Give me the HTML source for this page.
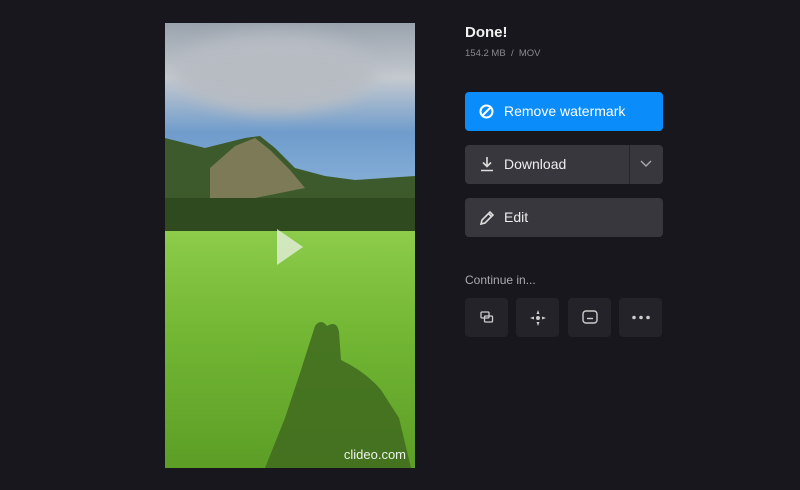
<!DOCTYPE html><html><head><style>
body{margin:0;width:800px;height:490px;background:#18171d;font-family:"Liberation Sans",sans-serif;position:relative;overflow:hidden}
.v{position:absolute;left:165px;top:23px;width:250px;height:445px;overflow:hidden;background:linear-gradient(#5ea423,#7cc23a 40%,#6aac2c)}
.abs{position:absolute}
.btn{position:absolute;left:465px;width:198px;height:39px;border-radius:4px;background:#38373d;color:#eee;font-size:14px;line-height:39px}
.btn span{position:absolute;left:39px}
.ib{position:absolute;top:298px;width:43px;height:39px;border-radius:4px;background:#242329}
</style></head><body>
<div class="v">
<div class="abs" style="left:0;top:0;width:250px;height:220px;background:linear-gradient(#9aa3ad,#c4c9cf 25%,#6f9ccc 50%,#9cc2e2)"></div>
<div class="abs" style="left:10px;top:10px;width:200px;height:80px;border-radius:50%;background:#b7bcc3;filter:blur(8px)"></div>
<svg class="abs" style="left:0;top:105px" width="250" height="110"><polygon points="0,10 20,15 40,20 60,15 80,10 95,8 110,20 130,40 160,48 190,52 220,50 250,48 250,110 0,110" fill="#3d5a2c"/><polygon points="45,40 70,18 90,10 105,22 125,42 140,60 90,70 45,70" fill="#7d7a58"/><rect y="70" width="250" height="40" fill="#2e4a1e"/></svg>
<div class="abs" style="left:0;top:208px;width:250px;height:237px;background:linear-gradient(#8ccc4a,#72b634 45%,#5c9e26)"></div>
<svg class="abs" style="left:100px;top:295px" width="150" height="150"><path d="M50 8 q6-8 12 0 q10-6 12 6 l2 28 q25 12 40 30 l18 28 l12 50 H0 l20-50 l15-45 z" fill="#3f6a1f" opacity=".85"/></svg>
<svg class="abs" style="left:112px;top:206px" width="28" height="36"><polygon points="0,0 26,18 0,36" fill="#e9f0e4" opacity=".75"/></svg>
<div class="abs" style="right:9px;bottom:6px;color:#fff;font-size:13px;opacity:.9">clideo.com</div>
</div>
<div class="abs" style="left:465px;top:24px;color:#f2f2f2;font-size:15px;font-weight:bold">Done!</div>
<div class="abs" style="left:465px;top:48px;color:#8a8990;font-size:9.5px">154.2 MB &nbsp;/&nbsp; MOV</div>
<div class="btn" style="top:92px;background:#0a8cfa;color:#fff"><svg class="abs" style="left:14px;top:12px" width="15" height="15" fill="none" stroke="#fff" stroke-width="2"><circle cx="7.5" cy="7.5" r="6"/><path d="M3.5 11.5L11.5 3.5"/></svg><span>Remove watermark</span></div>
<div class="btn" style="top:145px"><svg class="abs" style="left:14px;top:11px" width="16" height="16" fill="none" stroke="#ddd" stroke-width="1.6"><path d="M8 1v9M4 6.5l4 4 4-4M2 14.5h12"/></svg><span>Download</span><div class="abs" style="left:164px;top:0;width:1px;height:39px;background:#26252a"></div><svg class="abs" style="left:175px;top:15px" width="12" height="8" fill="none" stroke="#aaa" stroke-width="1.4"><path d="M1 1l5 5 5-5"/></svg></div>
<div class="btn" style="top:198px"><svg class="abs" style="left:14px;top:12px" width="16" height="16" fill="none" stroke="#ddd" stroke-width="1.6"><path d="M2 14l1-4 8-8 3 3-8 8z M9.5 3.5l3 3"/></svg><span>Edit</span></div>
<div class="abs" style="left:465px;top:273px;color:#aaa9af;font-size:12px">Continue in...</div>
<div class="ib" style="left:465px"><svg class="abs" style="left:15px;top:13px" width="14" height="13" fill="none" stroke="#ccc" stroke-width="1.3"><rect x="1" y="1" width="8" height="6" rx="1"/><rect x="4.5" y="5" width="8" height="6" rx="1"/></svg></div>
<div class="ib" style="left:516px"><svg class="abs" style="left:14px;top:12px" width="16" height="16" fill="#ccc"><path d="M8 0l1.5 4h-3zM8 16l1.5-4h-3zM0 8l4 1.5v-3zM16 8l-4 1.5v-3z"/><circle cx="8" cy="8" r="2"/></svg></div>
<div class="ib" style="left:568px"><svg class="abs" style="left:14px;top:12px" width="16" height="15" fill="none" stroke="#ccc" stroke-width="1.4"><rect x="1" y="1" width="14" height="12" rx="3"/><path d="M5 8.5h6"/></svg></div>
<div class="ib" style="left:619px"><svg class="abs" style="left:12px;top:17px" width="20" height="5" fill="#ccc"><circle cx="3" cy="2.5" r="1.8"/><circle cx="10" cy="2.5" r="1.8"/><circle cx="17" cy="2.5" r="1.8"/></svg></div>
</body></html>
